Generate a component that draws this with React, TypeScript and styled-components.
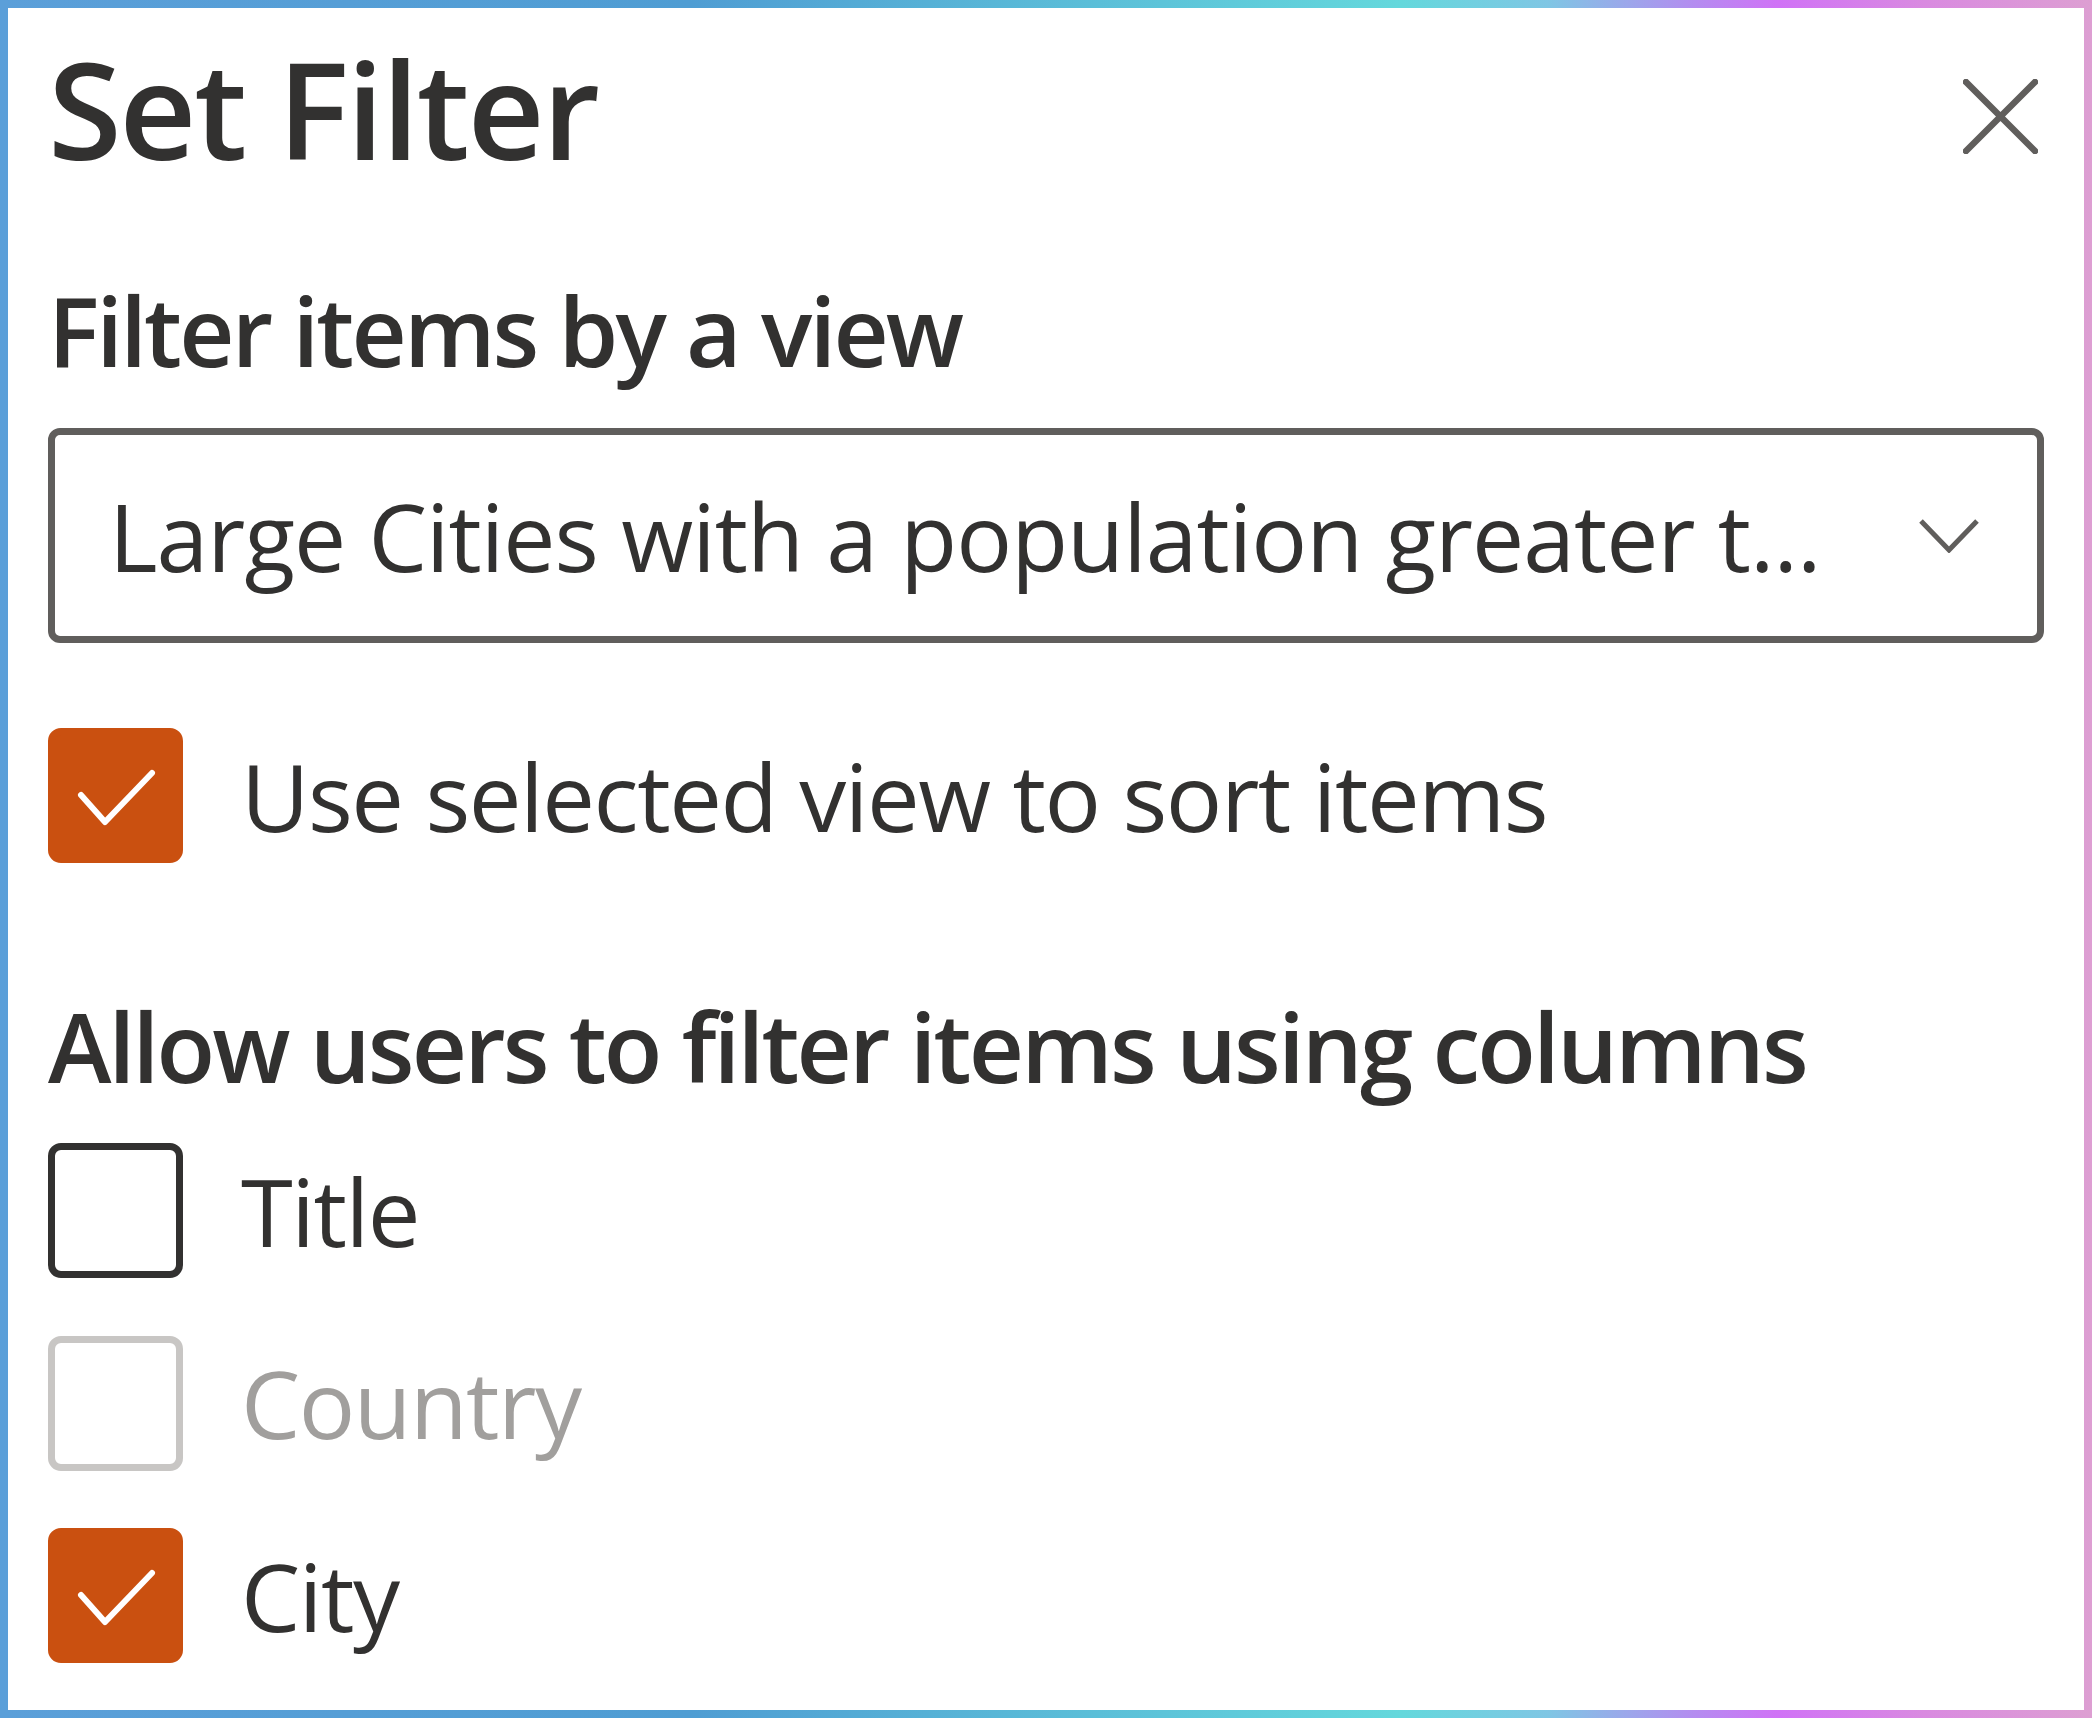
import React from "react";
import styled, { createGlobalStyle } from "styled-components";

const GlobalStyle = createGlobalStyle`
    html, body {
        margin: 0;
        padding: 0;
        background: #ffffff;
    }
    body {
        font-family: "Open Sans", "Noto Sans", sans-serif;
        color: #323130;
    }
`;

const Frame = styled.div`
    width: 2092px;
    height: 1718px;
    box-sizing: border-box;
    padding: 8px;
    background: linear-gradient(
        90deg,
        #5b9fd9 0%,
        #4f9dd3 33%,
        #64d8dc 67%,
        #7fc6e4 74%,
        #b48cf0 81%,
        #d072f6 85%,
        #d98ae0 92%,
        #dd9fd2 100%
    );
`;

const Panel = styled.section`
    height: 100%;
    box-sizing: border-box;
    background: #ffffff;
    padding: 20px 40px;
    display: flex;
    flex-direction: column;
`;

const Header = styled.header`
    display: flex;
    align-items: center;
    justify-content: space-between;
`;

const Title = styled.h1`
    margin: 0;
    font-size: 134px;
    line-height: 160px;
    font-weight: 600;
    letter-spacing: -2.3px;
    color: #323130;
`;

const CloseButton = styled.button`
    border: 0;
    background: transparent;
    padding: 0;
    margin: 16px 6px 0 0;
    width: 75px;
    height: 75px;
    display: flex;
    cursor: pointer;
`;

const SectionLabel = styled.h2<{ $top: number; $bottom: number }>`
    margin: ${(p) => p.$top}px 0 ${(p) => p.$bottom}px;
    font-size: 96px;
    line-height: 128px;
    font-weight: 600;
    letter-spacing: -2.85px;
    color: #323130;
    white-space: nowrap;
`;

const Dropdown = styled.div`
    height: 215px;
    box-sizing: border-box;
    border: 7px solid #605e5c;
    border-radius: 12px;
    display: flex;
    align-items: center;
    justify-content: space-between;
    padding: 0 58px 0 54px;
`;

const DropdownText = styled.span`
    font-size: 93px;
    letter-spacing: -0.95px;
    color: #323130;
    white-space: nowrap;
`;

const CheckList = styled.div`
    display: flex;
    flex-direction: column;
    gap: 57.5px;
`;

const CheckRow = styled.label<{ $top?: number }>`
    display: flex;
    align-items: center;
    gap: 58px;
    margin-top: ${(p) => p.$top ?? 0}px;
    height: 135px;
`;

const Box = styled.span<{ $checked?: boolean; $disabled?: boolean }>`
    width: 135px;
    height: 135px;
    flex: none;
    box-sizing: border-box;
    border-radius: 13px;
    display: flex;
    border: 7px solid
        ${(p) => (p.$checked ? "#ca5010" : p.$disabled ? "#c8c6c4" : "#323130")};
    background: ${(p) => (p.$checked ? "#ca5010" : "#ffffff")};
`;

const RowText = styled.span<{ $disabled?: boolean }>`
    font-size: 94px;
    line-height: 128px;
    letter-spacing: -1.5px;
    color: ${(p) => (p.$disabled ? "#a19f9d" : "#323130")};
    white-space: nowrap;
`;

const CheckMark = () => (
    <svg width="121" height="121" viewBox="0 0 121 121" fill="none">
        <polyline
            points="26,60 50,87 97,38"
            stroke="#ffffff"
            strokeWidth="6"
            strokeLinecap="round"
            strokeLinejoin="round"
        />
    </svg>
);

type CheckProps = {
    label: string;
    checked?: boolean;
    disabled?: boolean;
    top?: number;
};

const Check = ({ label, checked, disabled, top }: CheckProps) => (
    <CheckRow $top={top}>
        <Box $checked={checked} $disabled={disabled}>
            {checked && <CheckMark />}
        </Box>
        <RowText $disabled={disabled}>{label}</RowText>
    </CheckRow>
);

const App = () => {
    return (
        <>
            <GlobalStyle />
            <Frame>
                <Panel>
                    <Header>
                        <Title>Set Filter</Title>
                        <CloseButton aria-label="Close">
                            <svg width="75" height="75" viewBox="0 0 75 75">
                                <path d="M3 3 L72 72 M72 3 L3 72" stroke="#605e5c" strokeWidth="6.5" strokeLinecap="round" />
                            </svg>
                        </CloseButton>
                    </Header>

                    <SectionLabel $top={78} $bottom={34}>Filter items by a view</SectionLabel>
                    <Dropdown>
                        <DropdownText>Large Cities with a population greater t...</DropdownText>
                        <svg width="60" height="34" viewBox="0 0 60 34" fill="none">
                            <polyline points="2,2 30,31 58,2" stroke="#605e5c" strokeWidth="5" strokeLinejoin="miter" />
                        </svg>
                    </Dropdown>

                    <Check label="Use selected view to sort items" checked top={85} />

                    <SectionLabel $top={119} $bottom={33}>Allow users to filter items using columns</SectionLabel>
                    <CheckList>
                        <Check label="Title" />
                        <Check label="Country" disabled />
                        <Check label="City" checked />
                    </CheckList>
                </Panel>
            </Frame>
        </>
    );
};

export default App;
